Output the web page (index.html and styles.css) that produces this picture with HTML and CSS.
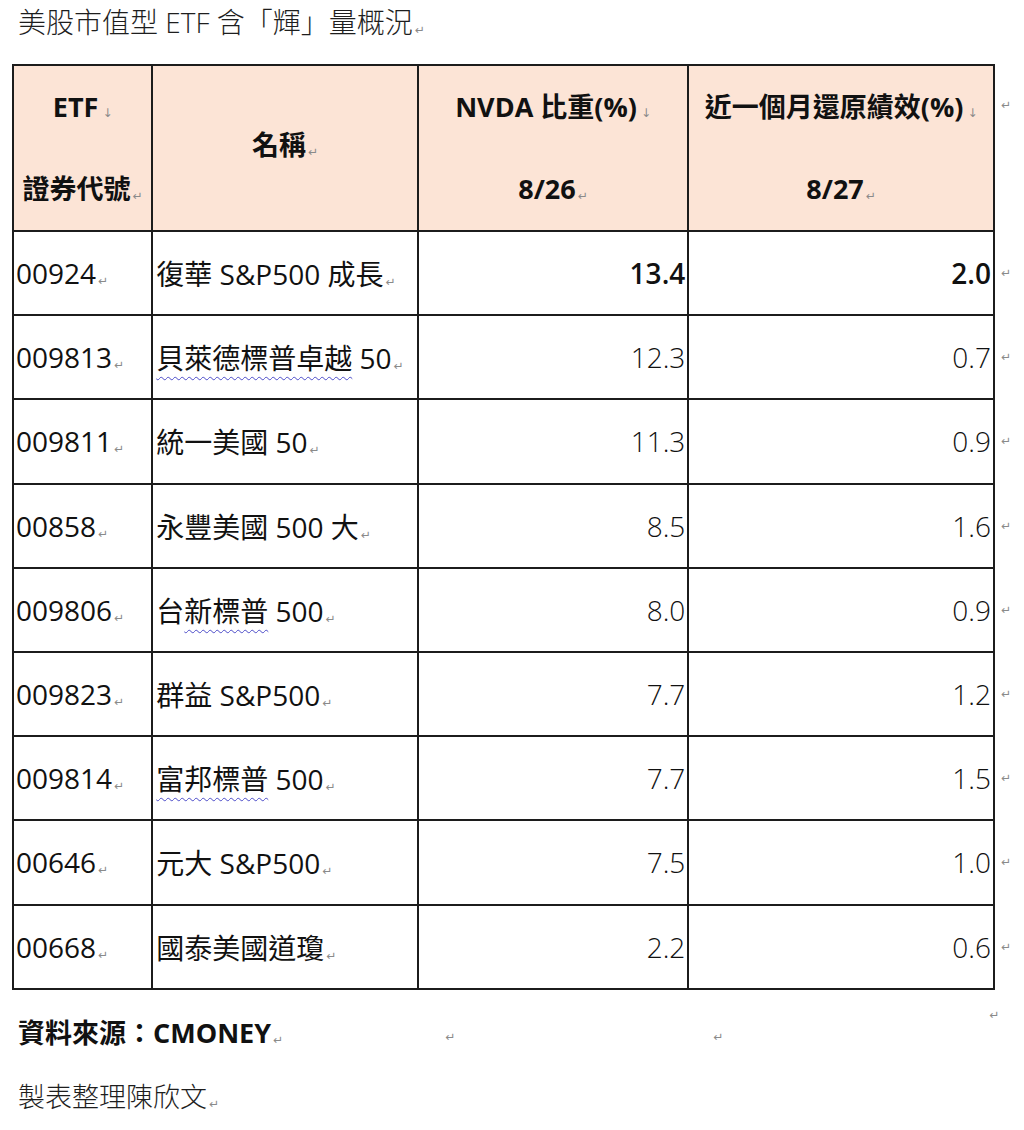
FILE: index.html
```html
<!DOCTYPE html>
<html lang="zh-Hant">
<head>
<meta charset="utf-8">
<title>美股市值型 ETF 含「輝」量概況</title>
<link rel="stylesheet" href="styles.css">
</head>
<body>
<div class="page">
  <p class="title">美股市值型 ETF 含「輝」量概況<span class="pm">↵</span></p>

  <table class="etf">
    <colgroup>
      <col class="c1"><col class="c2"><col class="c3"><col class="c4"><col class="c5">
    </colgroup>
    <thead>
      <tr class="hrow">
        <th><div class="hl">ETF<span class="lb">↓</span></div><div class="hl">證券代號<span class="pm">↵</span></div></th>
        <th><div class="hl1">名稱<span class="pm">↵</span></div></th>
        <th><div class="hl">NVDA 比重(%)<span class="lb">↓</span></div><div class="hl">8/26<span class="pm">↵</span></div></th>
        <th><div class="hl">近一個月還原績效(%)<span class="lb">↓</span></div><div class="hl">8/27<span class="pm">↵</span></div></th>
        <td class="endm"><span class="pm">↵</span></td>
      </tr>
    </thead>
    <tbody>
      <tr class="drow">
        <td class="code">00924<span class="pm">↵</span></td>
        <td class="name">復華 S&amp;P500 成長<span class="pm">↵</span></td>
        <td class="num strong">13.4</td>
        <td class="num strong">2.0</td>
        <td class="endm"><span class="pm">↵</span></td>
      </tr>
      <tr class="drow">
        <td class="code">009813<span class="pm">↵</span></td>
        <td class="name"><span class="wavy">貝萊德標普卓越</span> 50<span class="pm">↵</span></td>
        <td class="num">12.3</td>
        <td class="num">0.7</td>
        <td class="endm"><span class="pm">↵</span></td>
      </tr>
      <tr class="drow">
        <td class="code">009811<span class="pm">↵</span></td>
        <td class="name">統一美國 50<span class="pm">↵</span></td>
        <td class="num">11.3</td>
        <td class="num">0.9</td>
        <td class="endm"><span class="pm">↵</span></td>
      </tr>
      <tr class="drow">
        <td class="code">00858<span class="pm">↵</span></td>
        <td class="name">永豐美國 500 大<span class="pm">↵</span></td>
        <td class="num">8.5</td>
        <td class="num">1.6</td>
        <td class="endm"><span class="pm">↵</span></td>
      </tr>
      <tr class="drow">
        <td class="code">009806<span class="pm">↵</span></td>
        <td class="name">台<span class="wavy">新標普</span> 500<span class="pm">↵</span></td>
        <td class="num">8.0</td>
        <td class="num">0.9</td>
        <td class="endm"><span class="pm">↵</span></td>
      </tr>
      <tr class="drow">
        <td class="code">009823<span class="pm">↵</span></td>
        <td class="name">群益 S&amp;P500<span class="pm">↵</span></td>
        <td class="num">7.7</td>
        <td class="num">1.2</td>
        <td class="endm"><span class="pm">↵</span></td>
      </tr>
      <tr class="drow">
        <td class="code">009814<span class="pm">↵</span></td>
        <td class="name"><span class="wavy">富邦標普</span> 500<span class="pm">↵</span></td>
        <td class="num">7.7</td>
        <td class="num">1.5</td>
        <td class="endm"><span class="pm">↵</span></td>
      </tr>
      <tr class="drow">
        <td class="code">00646<span class="pm">↵</span></td>
        <td class="name">元大 S&amp;P500<span class="pm">↵</span></td>
        <td class="num">7.5</td>
        <td class="num">1.0</td>
        <td class="endm"><span class="pm">↵</span></td>
      </tr>
      <tr class="drow">
        <td class="code">00668<span class="pm">↵</span></td>
        <td class="name">國泰美國道瓊<span class="pm">↵</span></td>
        <td class="num">2.2</td>
        <td class="num">0.6</td>
        <td class="endm"><span class="pm">↵</span></td>
      </tr>
    </tbody>
  </table>

  <div class="after">
    <div class="source-line">
      <span class="source">資料來源：CMONEY<span class="pm">↵</span></span>
      <span class="pm mark-a">↵</span>
      <span class="pm mark-b">↵</span>
      <span class="pm mark-c">↵</span>
    </div>
    <p class="maker">製表整理陳欣文<span class="pm">↵</span></p>
  </div>
</div>
</body>
</html>
```

FILE: styles.css
```css
html, body {
  margin: 0;
  padding: 0;
  background: #ffffff;
}

body {
  font-family: "Open Sans", "Noto Sans CJK TC", sans-serif;
  color: #111111;
}

.page {
  width: 1024px;
  height: 1130px;
  overflow: hidden;
}

.title {
  margin: 0 0 20px 18px;
  height: 44px;
  line-height: 44px;
  font-size: 28px;
  font-weight: 300;
  color: #1e1e1e;
  white-space: nowrap;
}

.pm {
  font-family: "DejaVu Sans", sans-serif;
  font-size: 12px;
  font-weight: 400;
  color: #8a8a8a;
  margin-left: 2px;
  vertical-align: -1px;
}

.lb {
  font-family: "DejaVu Sans", sans-serif;
  font-size: 12px;
  font-weight: 400;
  color: #8a8a8a;
  margin-left: 4px;
  vertical-align: 0;
}

.etf {
  margin-left: 12px;
  border-collapse: separate;
  border-spacing: 0;
  table-layout: fixed;
  width: 1011px;
}

.c1 { width: 141px; }
.c2 { width: 265px; }
.c3 { width: 270px; }
.c4 { width: 305px; }
.c5 { width: 28px; }

.etf th,
.etf td {
  box-sizing: border-box;
  padding: 0;
  border-right: 2px solid #1c1c1c;
  border-bottom: 2px solid #1c1c1c;
  font-size: 28px;
  white-space: nowrap;
  vertical-align: middle;
}

.etf th:first-child,
.etf td:first-child {
  border-left: 2px solid #1c1c1c;
}

.etf thead th {
  border-top: 2px solid #1c1c1c;
  background: #fce4d6;
  font-size: 27px;
  font-weight: 700;
  text-align: center;
  color: #111111;
}

.hrow {
  height: 168px;
}

.hl {
  height: 82px;
  line-height: 82px;
}

.hl1 {
  line-height: 40px;
}

.drow {
  height: 84.2px;
}

.etf td.code {
  padding-left: 2px;
  text-align: left;
}

.etf td.name {
  padding-left: 3px;
  text-align: left;
}

.etf td.num {
  padding-right: 2px;
  text-align: right;
  font-weight: 300;
}

.etf td.num.strong {
  font-weight: 600;
}

.etf .endm {
  border: none !important;
  background: transparent !important;
  vertical-align: top;
  text-align: left;
  padding-top: 14px;
  padding-left: 6px;
}

.etf .endm .pm {
  margin-left: 0;
}

.wavy {
  text-decoration: underline wavy #4b4bc8;
  text-decoration-thickness: 1px;
  text-underline-offset: 7px;
  text-decoration-skip-ink: none;
}

.after {
  padding-left: 18px;
}

.source-line {
  height: 60px;
  margin-top: 12px;
  display: flex;
  align-items: center;
}

.source {
  font-size: 27px;
  font-weight: 700;
  white-space: nowrap;
}

.mark-a {
  margin-left: 162px;
  margin-top: 10px;
}

.mark-b {
  margin-left: 258px;
  margin-top: 10px;
}

.mark-c {
  margin-left: 266px;
  margin-top: -34px;
}

.maker {
  margin: 10px 0 0 0;
  height: 50px;
  line-height: 50px;
  font-size: 27px;
  font-weight: 300;
  color: #1e1e1e;
  white-space: nowrap;
}
```
